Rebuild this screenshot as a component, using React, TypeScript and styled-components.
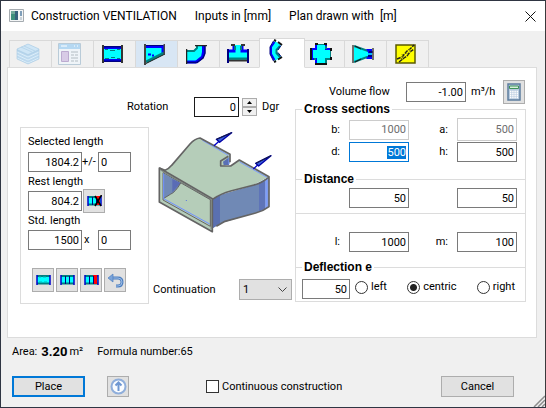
import React, { useEffect, useRef, useState } from "react";
import type { ReactNode } from "react";
import styled, { createGlobalStyle, css } from "styled-components";

const GlobalStyle = createGlobalStyle`
  *, *::before, *::after { box-sizing: border-box; }
  body {
    margin: 0;
    background: #f0f0f0;
    color: #000;
    font-family: Roboto, "Liberation Sans", sans-serif;
    font-size: 11px;
    line-height: 14px;
  }
  input, button, select { font: inherit; color: inherit; margin: 0; }
  ::selection { background: #0078d7; color: #fff; }
`;

const Window = styled.main`
  display: flex;
  flex-direction: column;
  min-height: 100vh;
  background: #f0f0f0;
  border: 1px solid #2f3542;
  border-right-color: #3a3a3c;
`;

const TitleBar = styled.header`
  display: flex;
  align-items: center;
  height: 30px;
  padding: 0 4px 0 8px;
  gap: 6px;
  background: #fff;
  font-size: 12px;
`;

const Title = styled.h1`
  display: flex;
  flex: 1;
  gap: 18px;
  margin: 0;
  font: inherit;
  white-space: pre;
`;

const CloseButton = styled.button`
  display: flex;
  padding: 5px;
  border: 0;
  background: none;
`;

const Tabs = styled.nav`
  display: flex;
  align-items: flex-end;
  height: 37px;
  margin-bottom: -1px;
  padding-left: 8px;
`;

const Tab = styled.button<{ $active?: boolean; $hot?: boolean }>`
  display: flex;
  align-items: center;
  justify-content: center;
  width: 43px;
  height: 28px;
  margin-right: -1px;
  padding: 0 5px 0 0;
  border: 1px solid #d9d9d9;
  background: ${(p) => (p.$hot ? "#d8e6f4" : "#f0f0f0")};
  ${(p) =>
    p.$active &&
    css`
      position: relative;
      z-index: 1;
      width: 46px;
      height: 30px;
      margin: 0 -3px 0 -2px;
      padding: 0 12px 4px 0;
      background: #fff;
      border-bottom-color: #fff;
    `}
`;

const Panel = styled.section`
  display: flex;
  justify-content: space-between;
  flex: 1;
  margin: 0 8px 0 6px;
  padding: 12px 10px 12px 12px;
  background: #fff;
  border: 1px solid #dcdcdc;
`;

const LeftSide = styled.div`
  display: flex;
  flex-direction: column;
  width: 272px;
`;

const RightSide = styled.div`
  width: 231px;
`;

const RotationRow = styled.div`
  display: flex;
  align-items: center;
  height: 20px;
  margin: 17px 0 10px 107px;
`;

const RotationLabel = styled.label`
  width: 67px;
`;

const Field = styled.input<{ $w?: number; $left?: boolean; $dark?: boolean; $tall?: boolean }>`
  width: ${(p) => p.$w ?? 60}px;
  height: ${(p) => (p.$tall ? 23 : 20)}px;
  flex: none;
  padding: 0 2px;
  border: 1px solid ${(p) => (p.$dark ? "#1a1a1a" : "#7a7a7a")};
  border-radius: 0;
  background: #fff;
  text-align: ${(p) => (p.$left ? "left" : "right")};
  outline: 0;
  &:focus { border-color: #0078d7; }
  &:disabled { border-color: #ccc; color: #6d6d6d; }
`;

const Spinner = styled.div`
  display: flex;
  flex-direction: column;
  width: 15px;
  margin: 0 5px 0 3px;
`;

const SpinButton = styled.button`
  display: flex;
  align-items: center;
  justify-content: center;
  height: 9px;
  padding: 0;
  border: 1px solid #acacac;
  background: #f0f0f0;
`;

const Lower = styled.div`
  display: flex;
  gap: 4px;
`;

const LengthBox = styled.div`
  display: flex;
  flex-direction: column;
  width: 129px;
  height: 177px;
  padding: 7px;
  border: 1px solid #dcdcdc;
`;

const LengthLabel = styled.label`
  height: 14px;
`;

const LengthRow = styled.div<{ $top: number; $bottom: number; $gap?: number }>`
  display: flex;
  align-items: center;
  gap: ${(p) => p.$gap ?? 0}px;
  height: 20px;
  margin: ${(p) => p.$top}px 0 ${(p) => p.$bottom}px;
`;

const Between = styled.span<{ $pad?: number }>`
  width: 16px;
  padding-left: ${(p) => p.$pad ?? 0}px;
  white-space: nowrap;
`;

const IconRow = styled.div`
  display: flex;
  gap: 2px;
  margin: 18px 0 0 4px;
`;

const IconButton = styled.button`
  display: flex;
  flex: none;
  align-items: center;
  justify-content: center;
  width: 22px;
  height: 24px;
  padding: 0;
  border: 1px solid #adadad;
  background: #e1e1e1;
`;

const Preview = styled.div`
  display: flex;
  flex-direction: column;
  justify-content: space-between;
  width: 139px;
  padding: 3px 0 4px;
`;

const DuctDrawing = styled.svg`
  margin-left: 3px;
`;

const ContinuationRow = styled.div`
  display: flex;
  align-items: center;
  justify-content: space-between;
`;

const SelectWrap = styled.div`
  display: grid;
  width: 53px;
  height: 21px;
  align-items: center;
  > * { grid-area: 1 / 1; }
  > svg { justify-self: end; margin-right: 5px; pointer-events: none; }
`;

const Select = styled.select`
  appearance: none;
  width: 53px;
  height: 21px;
  padding: 0 3px;
  border: 1px solid #adadad;
  border-radius: 0;
  background: #e1e1e1;
`;

const FlowRow = styled.div`
  display: flex;
  align-items: center;
  height: 24px;
  margin-bottom: -2px;
  padding: 0 1px 0 34px;
`;

const FlowLabel = styled.label`
  width: 77px;
`;

const Unit = styled.span`
  flex: 1;
  padding-left: 5px;
`;

const Group = styled.fieldset<{ $h: number; $last?: boolean; $joined?: boolean }>`
  display: block;
  min-width: 0;
  height: ${(p) => p.$h}px;
  margin: ${(p) => (p.$joined ? "-7px" : "0")} 0 0;
  padding: 2px 0 0;
  border: 1px solid #dcdcdc;
  border-bottom-width: ${(p) => (p.$last ? 1 : 0)}px;
`;

const PlainGroup = styled.div`
  height: 54px;
  padding-top: 18px;
  border: 1px solid #dcdcdc;
  border-bottom: 0;
`;

const Legend = styled.legend`
  height: 14px;
  margin-left: 6px;
  padding: 0 2px;
  font-family: "Liberation Sans", Arial, sans-serif;
  font-size: 12px;
  font-weight: 700;
`;

const Pairs = styled.div`
  display: grid;
  grid-template-columns: 53px 60px 48px 60px;
  align-items: center;
  row-gap: 1px;
`;

const PairLabel = styled.label`
  padding-right: 9px;
  text-align: right;
`;

const DeflectionRow = styled.div`
  display: flex;
  align-items: center;
  padding: 3px 10px 0 6px;
`;

const Radios = styled.div`
  display: flex;
  flex: 1;
  justify-content: space-between;
  padding: 0 0 4px 5px;
`;

const RadioLabel = styled.label`
  display: flex;
  align-items: center;
  gap: 3px;
`;

const Radio = styled.input`
  appearance: none;
  width: 13px;
  height: 13px;
  border: 1px solid #333;
  border-radius: 50%;
  background: #fff;
  &:checked { background: radial-gradient(circle, #222 0 3px, #fff 4px); }
`;

const Status = styled.div`
  display: flex;
  align-items: center;
  height: 16px;
  margin: 6px 11px 16px;
`;

const AreaValue = styled.strong`
  margin: 0 2px 0 4px;
  font-size: 13px;
`;

const Formula = styled.span`
  margin-left: 14px;
`;

const Footer = styled.footer`
  display: flex;
  align-items: flex-end;
  padding-left: 11px;
  height: 31px;
`;

const Actions = styled.div`
  display: flex;
  flex: 1;
  align-items: center;
  justify-content: space-between;
  height: 21px;
  margin-bottom: 10px;
`;

const ActionGroup = styled.div`
  display: flex;
  align-items: center;
  gap: 22px;
`;

const Button = styled.button<{ $primary?: boolean }>`
  width: 73px;
  height: 21px;
  padding: 0;
  border: ${(p) => (p.$primary ? "2px solid #0078d7" : "1px solid #adadad")};
  background: #e1e1e1;
`;

const ShortIconButton = styled(IconButton)`
  height: 21px;
`;

const CheckLabel = styled.label`
  display: flex;
  align-items: center;
  gap: 3px;
  margin: 0 auto 0 77px;
`;

const CheckBox = styled.input`
  appearance: none;
  width: 13px;
  height: 13px;
  border: 1px solid #333;
  background: #fff;
  &:checked { background: #0078d7; }
`;

const Grip = styled.svg`
  margin-left: 19px;
`;

function Glyph({ w = 20, h = 20, children }: { w?: number; h?: number; children: ReactNode }) {
  return (
    <svg width={w} height={h} viewBox={`0 0 ${w} ${h}`} fill="none" aria-hidden="true">
      {children}
    </svg>
  );
}

const AppIcon = () => (
  <Glyph w={16} h={14}>
    <path d="M.5 .5h14v12H.5z" fill="#f3f5f6" stroke="#a5abb0" />
    <path d="M2 2h7v9H2z" fill="#3e8f7c" />
    <path d="M6 2h3v9H6z" fill="#36617c" />
    <path d="M2 2h4v3H2z" fill="#72a99b" />
    <path d="M11 2h2v5h-2z" fill="#7f9eb9" />
    <path d="M11 8h2v3h-2z" fill="#c9d2d9" />
  </Glyph>
);

const LayersIcon = () => (
  <Glyph w={24} h={22}>
    <path d="M12 1 23 6v10l-11 5-11-5V6z" fill="#bdd9ee" />
    <path d="M12 1 23 6l-11 5L1 6z" fill="#cfe6f6" />
    <path d="m1 9 11 5 11-5M1 12l11 5 11-5M1 15l11 5 11-5" stroke="#dceefa" />
    <path d="m1 7 11 5 11-5M5 4l11 5M8 3l11 5M12 1 1 6v10l11 5 11-5V6z" stroke="#aacbe4" strokeWidth=".6" />
  </Glyph>
);

const FormIcon = () => (
  <Glyph w={24} h={22}>
    <path d="M.5 .5h22v21H.5z" fill="#eff4f8" stroke="#b9cbd8" />
    <path d="M1 1h21v5H1z" fill="#b5d8f2" />
    <path d="M3 3h6M16 3h1M19 3h1" stroke="#fff" />
    <path d="M3.500 8.500h7v10h-7z" fill="#d8cbe6" stroke="#bcabd0" />
    <path d="M13 9h7M13 12h3M17 12h3M13 15h7M13 18h3M17 18h3" stroke="#c8ced4" strokeWidth="1.500" />
  </Glyph>
);

const StraightIcon = () => (
  <Glyph w={21} h={20}>
    <path d="M1 2h19v16H1z" fill="#00f" />
    <path d="M2 2h17v1.500H2zM2 16.500h17V18H2z" fill="#000080" />
    <path d="M2 5h17v10H2z" fill="#0ff" />
    <path d="M3 5.500h3M8 6.500h5M15 5.500h3M3 14.500h4M9 13.500h4M15 14.500h3" stroke="#008080" />
    <path d="M1 1v18M20 1v18" stroke="#333" strokeWidth="2" />
  </Glyph>
);

const ReducerIcon = () => (
  <Glyph w={21} h={21}>
    <path d="M2 3h17v7L2 18z" fill="#0ff" />
    <path d="M1 2.500h18M19 1v10" stroke="#00f" strokeWidth="3" />
    <path d="M2 1.500h17" stroke="#000080" />
    <path d="m2 18 18-9" stroke="#008080" strokeWidth="3" />
    <path d="m2 19.500 18-9" stroke="#222" />
    <path d="M4 10.500h3M8 11.500h2" stroke="#00f" strokeWidth="2" />
    <path d="M1 0v21M20.500 0v11" stroke="#444" strokeWidth="2" />
  </Glyph>
);

const ElbowIcon = () => (
  <Glyph w={21} h={19}>
    <path d="M0 6h8l3-5h8v7l-2 5-6 5H0z" fill="#0ff" />
    <path d="M1 6h7l3-3V1" stroke="#008080" strokeWidth="2" />
    <path d="M17.500 1v6l-1 5-5 4-2 1H1" stroke="#00f" strokeWidth="3" />
    <path d="M19 1v7l-2 5-6 4.500H0" stroke="#000080" strokeWidth="1.500" />
    <path d="M.5 4v15M9 .5h12" stroke="#222" strokeWidth="1.500" />
  </Glyph>
);

const TeeIcon = () => (
  <Glyph w={22} h={20}>
    <path d="M6 1h10v6h4v9H2V7h4z" fill="#0ff" />
    <path d="M7 2v5H2M15 2v5h5" stroke="#00f" strokeWidth="3" />
    <path d="M8 2v4M14 2v4M2 14.500h18" stroke="#008080" strokeWidth="2" />
    <path d="M4 1h4M14 1h4M2 16.500h18" stroke="#333" strokeWidth="2" />
    <path d="M1 5v14M21 5v14" stroke="#000080" strokeWidth="2" />
  </Glyph>
);

const ForkIcon = () => (
  <Glyph w={14} h={24}>
    <path d="m6 2 6 4-4 5v2l4 5-6 4-5-7V8z" fill="#0ff" />
    <path d="M5.500 3 2 8v7l3.500 6" stroke="#00f" strokeWidth="2" />
    <path d="M11 7 7.500 11v3l3.500 4" stroke="#008080" strokeWidth="2" />
    <path d="M4.500 2 1 8v7l3.500 7M12 6.500 9 11M9 13.500l3 4" stroke="#000080" />
    <path d="m5 1 2 1M9 3l4 3M5 23l2-1M9 20.500l4-2.500" stroke="#111" strokeWidth="2" />
  </Glyph>
);

const CrossIcon = () => (
  <Glyph w={22} h={22}>
    <path d="M6 1h10v5h5v11h-4v4H6v-4H1V6h5z" fill="#0ff" />
    <path d="M6 2v4H2v10h4v4M16 2v4h4" stroke="#00f" strokeWidth="2" />
    <path d="M20 16h-4v4M16 3v3M4 16h2" stroke="#008080" strokeWidth="2" />
    <path d="M5 1h3M14 1h3M5 21h12M21 5v3M21 14v3M1 5v12" stroke="#111" strokeWidth="2" />
    <path d="M8 1.500h6M20.500 8v6" stroke="#008080" />
  </Glyph>
);

const ConeIcon = () => (
  <Glyph w={22} h={20}>
    <path d="m2 2 14 5v6L2 18z" fill="#0ff" />
    <path d="m2 2 14 5h4M2 18l13-5h5" stroke="#008080" strokeWidth="2" />
    <path d="m3 2 6 3M3 18l6-3" stroke="#111" />
    <path d="M14 5h6v10h-6l2-3V8z" fill="#00f" />
    <path d="M17 8h4M16 12h4" stroke="#000080" strokeWidth="2" />
    <path d="M16 10h4" stroke="#0bf" strokeWidth="2" />
    <path d="M1 1v18M21 4v12" stroke="#444" strokeWidth="1.500" />
  </Glyph>
);

const FlexIcon = () => (
  <Glyph w={21} h={20}>
    <path d="M1 1h19v18H1z" fill="#ff0" stroke="#5a5a00" strokeWidth="1.500" />
    <path d="m2 15 5-2 5-6 3-2 4-4M4 18l5-4 3-2 3-4 4-3" stroke="#222" strokeDasharray="4 1" strokeWidth="1.500" />
    <path d="m7 10 1 3M11 8l2 3M14 5l2 3M5 13l3 3" stroke="#808000" />
  </Glyph>
);

const PieceIcon = ({ split, red, cross }: { split?: boolean; red?: boolean; cross?: boolean }) => (
  <Glyph w={15} h={12}>
    <path d="M1 2h13v8H1z" fill="#0ff" />
    <path d="M1 2h13M1 9.500h13" stroke="#008080" strokeWidth="2" />
    {red && <path d="M9 1h4v9H9z" fill="#f00" />}
    {split && <path d="M5.500 2v8M9.500 2v8" stroke="#008" />}
    {!split && <path d="M3 3h2M7 3h3M3 8h3M8 8h3" stroke="#0bb" />}
    <path d="M1 1v10M14 1v10" stroke="#00c" strokeWidth="1.500" />
    {cross && <path d="m8 1 6 10M14.500 0 8 11" stroke="#000" strokeWidth="1.500" />}
  </Glyph>
);

const UndoIcon = () => (
  <Glyph w={17} h={15}>
    <path d="M5 5h6q4 0 4 4t-4 4H9" stroke="#4d7fc0" strokeWidth="3" />
    <path d="M5 5h6q4 0 4 4t-4 4H9" stroke="#9dbde6" />
    <path d="M6 1v8L1 5z" fill="#7aa4da" stroke="#4d7fc0" strokeWidth=".7" />
  </Glyph>
);

const CalculatorIcon = () => (
  <Glyph w={14} h={18}>
    <path d="M1 1h12v16H1z" fill="#b9cce0" stroke="#5d7d9e" strokeWidth="1.500" />
    <path d="M2.500 3h9v2.500h-9z" fill="#d7f0d8" stroke="#3f9159" />
    <path d="M3 8.500h8M3 10.500h8M3 12.500h8M3 14.500h8" stroke="#fff" strokeDasharray="1.400 .8" strokeWidth="1.300" />
  </Glyph>
);

const UpIcon = () => (
  <Glyph w={17} h={17}>
    <circle cx="8.500" cy="8.500" r="7" fill="#fafcff" stroke="#8faedb" strokeWidth="2" />
    <path d="M8.500 13V5M5.500 7.500l3-3 3 3" stroke="#6f97d2" strokeWidth="2" />
  </Glyph>
);

const Duct = () => (
  <DuctDrawing width="118" height="105" viewBox="111 150 354 315" strokeLinejoin="round" role="img" aria-label="Duct fork">
    <path d="M282 357 300 346l105-31 45-24v89l-30 15-112 34-26 15z" fill="#7089b5" />
    <path d="M282 357 303 346v84l-21 14z" fill="#5a70b0" />
    <path d="M420 309 438 298v88l-18 9z" fill="#5e74b8" />
    <path d="M438 298 450 291v89l-12 6z" fill="#839de6" />
    <path d="m121 264 17 7 20-13 55-66q14-16 30-18l90 49v9l-28 11v15h30l26-18 89 50-45 24-105 31-20 10z" fill="#b5cdb9" />
    <path d="m305 243 28-15v22l-18 9h-10z" fill="#b5cdb9" />
    <path d="m312 245 18-13v23h-16z" fill="#5a70b5" />
    <path d="m250 181 78 45M362 246l82 46M330 233v20M443 298v80" stroke="#7c9cff" strokeWidth="3" fill="none" />
    <path d="m121 264 17 7q11-4 20-15l55-64q14-16 30-18l90 49v24M328 229l-23 14v15h30l26-18 89 50v90q-18 14-40 19l-92 25-26 15M450 291q-20 18-45 24l-70 18q-30 8-53 24" stroke="#646464" strokeWidth="5" fill="none" />
    <path d="m121 264 159 92v99l-159-89z" fill="#b5cdb9" stroke="#646464" strokeWidth="5" />
    <path d="m132 278 142 81v80l-142-79z" fill="#b5cdb9" stroke="#646464" strokeWidth="3" />
    <path d="m133 280 52 29q-16 28-31 34l-21 13z" fill="#7089b5" />
    <path d="m160 297 25 12-25 28z" fill="#5a6cb5" />
    <path d="M185 309q-16 28-31 34l-21 13" stroke="#646464" strokeWidth="3" fill="none" />
    <path d="M134 280v76l138 76" stroke="#6f90ff" strokeWidth="3" fill="none" />
    <path d="m124 270 152 88v90" stroke="#646464" strokeWidth="2" fill="none" />
    <path d="M202 360v3" stroke="#5a78e0" strokeWidth="3" />
    <path d="m285 197 20-18M403 267l22-20" stroke="#0000c8" strokeWidth="4" />
    <path d="m338 158-46 20 10 9zM456 227l-46 23 9 8z" fill="#3c62d8" stroke="#0000a8" strokeWidth="4" />
    <path d="m338 158-46 20M456 227l-46 23" stroke="#182038" strokeWidth="3" />
  </DuctDrawing>
);

const tabs = [
  { name: "Layers", icon: <LayersIcon /> },
  { name: "Properties", icon: <FormIcon /> },
  { name: "Straight", icon: <StraightIcon /> },
  { name: "Reducer", icon: <ReducerIcon />, hot: true },
  { name: "Elbow", icon: <ElbowIcon /> },
  { name: "Tee", icon: <TeeIcon /> },
  { name: "Fork", icon: <ForkIcon /> },
  { name: "Cross", icon: <CrossIcon /> },
  { name: "Cone", icon: <ConeIcon /> },
  { name: "Flexible", icon: <FlexIcon /> },
];

export default function App() {
  const depth = useRef<HTMLInputElement>(null);
  const [active, setActive] = useState("Fork");

  useEffect(() => {
    depth.current?.focus();
    depth.current?.select();
  }, []);

  return (
    <>
      <GlobalStyle />
      <Window>
        <TitleBar>
          <AppIcon />
          <Title>
            <span>Construction VENTILATION</span>
            <span>Inputs in [mm]</span>
            <span>{"Plan drawn with  [m]"}</span>
          </Title>
          <CloseButton aria-label="Close">
            <Glyph w={11} h={11}>
              <path d="m.5 .5 10 10M10.500 .5l-10 10" stroke="#111" />
            </Glyph>
          </CloseButton>
        </TitleBar>

        <Tabs>
          {tabs.map((t) => (
            <Tab key={t.name} aria-label={t.name} $active={t.name === active} $hot={t.hot} onClick={() => setActive(t.name)}>
              {t.icon}
            </Tab>
          ))}
        </Tabs>

        <Panel>
          <LeftSide>
            <RotationRow>
              <RotationLabel htmlFor="rotation">Rotation</RotationLabel>
              <Field id="rotation" $w={45} $dark defaultValue="0" />
              <Spinner>
                <SpinButton aria-label="Increase">
                  <Glyph w={5} h={3}><path d="M0 3h5L2.500 0z" fill="#000" /></Glyph>
                </SpinButton>
                <SpinButton aria-label="Decrease">
                  <Glyph w={5} h={3}><path d="M0 0h5L2.500 3z" fill="#000" /></Glyph>
                </SpinButton>
              </Spinner>
              <span>Dgr</span>
            </RotationRow>
            <Lower>
              <LengthBox>
                <LengthLabel htmlFor="selected">Selected length</LengthLabel>
                <LengthRow $top={3} $bottom={3}>
                  <Field id="selected" $w={54} defaultValue="1804.2" />
                  <Between>+/-</Between>
                  <Field $w={33} $left aria-label="Tolerance" defaultValue="0" />
                </LengthRow>
                <LengthLabel htmlFor="rest">Rest length</LengthLabel>
                <LengthRow $top={2} $bottom={3} $gap={1}>
                  <Field id="rest" $w={54} defaultValue="804.2" />
                  <IconButton aria-label="Remove rest">
                    <PieceIcon split red cross />
                  </IconButton>
                </LengthRow>
                <LengthLabel htmlFor="standard">Std. length</LengthLabel>
                <LengthRow $top={2} $bottom={0}>
                  <Field id="standard" $w={54} defaultValue="1500" />
                  <Between $pad={2}>x</Between>
                  <Field $w={33} $left aria-label="Count" defaultValue="0" />
                </LengthRow>
                <IconRow>
                  <IconButton aria-label="Single piece"><PieceIcon /></IconButton>
                  <IconButton aria-label="Split pieces"><PieceIcon split /></IconButton>
                  <IconButton aria-label="Pieces with rest"><PieceIcon split red /></IconButton>
                  <IconButton aria-label="Undo"><UndoIcon /></IconButton>
                </IconRow>
              </LengthBox>
              <Preview>
                <Duct />
                <ContinuationRow>
                  <label htmlFor="continuation">Continuation</label>
                  <SelectWrap>
                    <Select id="continuation" defaultValue="1">
                      <option>1</option>
                      <option>2</option>
                    </Select>
                    <Glyph w={9} h={6}><path d="m.5 .5 4 4 4-4" stroke="#444" /></Glyph>
                  </SelectWrap>
                </ContinuationRow>
              </Preview>
            </Lower>
          </LeftSide>

          <RightSide>
            <FlowRow>
              <FlowLabel htmlFor="flow">Volume flow</FlowLabel>
              <Field id="flow" defaultValue="-1.00" />
              <Unit>m³/h</Unit>
              <IconButton aria-label="Calculator"><CalculatorIcon /></IconButton>
            </FlowRow>
            <Group $h={77}>
              <Legend>Cross sections</Legend>
              <Pairs>
                <PairLabel htmlFor="b">b:</PairLabel>
                <Field id="b" disabled defaultValue="1000" />
                <PairLabel htmlFor="a">a:</PairLabel>
                <Field id="a" $tall disabled defaultValue="500" />
                <PairLabel htmlFor="d">d:</PairLabel>
                <Field id="d" ref={depth} defaultValue="500" />
                <PairLabel htmlFor="h">h:</PairLabel>
                <Field id="h" defaultValue="500" />
              </Pairs>
            </Group>
            <Group $h={41} $joined>
              <Legend>Distance</Legend>
              <Pairs>
                <span />
                <Field aria-label="First distance" defaultValue="50" />
                <span />
                <Field aria-label="Second distance" defaultValue="50" />
              </Pairs>
            </Group>
            <PlainGroup>
              <Pairs>
                <PairLabel htmlFor="l">l:</PairLabel>
                <Field id="l" defaultValue="1000" />
                <PairLabel htmlFor="m">m:</PairLabel>
                <Field id="m" defaultValue="100" />
              </Pairs>
            </PlainGroup>
            <Group $h={42} $joined $last>
              <Legend>Deflection e</Legend>
              <DeflectionRow>
                <Field $w={48} aria-label="Deflection e" defaultValue="50" />
                <Radios>
                  <RadioLabel><Radio type="radio" name="side" />left</RadioLabel>
                  <RadioLabel><Radio type="radio" name="side" defaultChecked />centric</RadioLabel>
                  <RadioLabel><Radio type="radio" name="side" />right</RadioLabel>
                </Radios>
              </DeflectionRow>
            </Group>
          </RightSide>
        </Panel>

        <Status>
          <span>Area:</span>
          <AreaValue>3.20</AreaValue>
          <span>m²</span>
          <Formula>Formula number:65</Formula>
        </Status>
        <Footer>
          <Actions>
            <ActionGroup>
              <Button $primary>Place</Button>
              <ShortIconButton aria-label="Move up"><UpIcon /></ShortIconButton>
            </ActionGroup>
            <CheckLabel><CheckBox type="checkbox" />Continuous construction</CheckLabel>
            <Button>Cancel</Button>
          </Actions>
          <Grip width="12" height="12" viewBox="0 0 12 12" aria-hidden="true">
            <path d="M1 12 12 1M5 12l7-7M9 12l3-3" stroke="#8c8c8c" strokeWidth="1.500" />
          </Grip>
        </Footer>
      </Window>
    </>
  );
}
